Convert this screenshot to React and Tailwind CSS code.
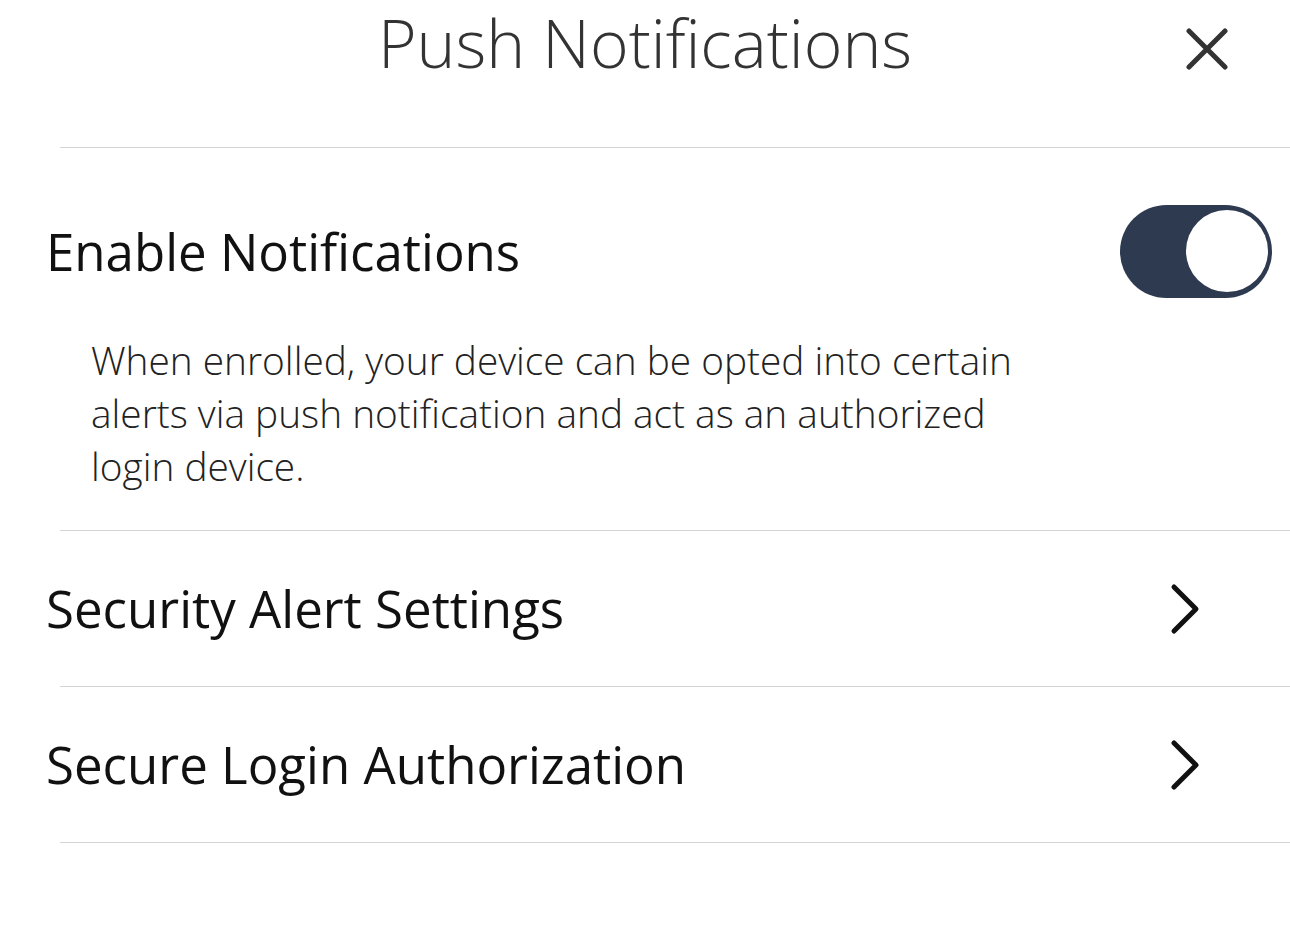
import React, { useState } from "react";

function Chevron() {
  return (
    <svg width="36" height="52" viewBox="0 0 36 52" fill="none">
      <path d="M8 4 L30 26 L8 48" stroke="#111" strokeWidth="5" strokeLinecap="round" strokeLinejoin="round" />
    </svg>
  );
}

export default function App() {
  const [enabled, setEnabled] = useState(true);

  return (
    <div className="bg-white w-[1290px] h-[932px] overflow-hidden" style={{ fontFamily: "'Open Sans', sans-serif" }}>
      {/* HEADER */}
      <div className="relative h-[147px] flex justify-center">
        <h1 className="text-[66px] font-light text-[#333] leading-[1.2] pt-[3px]">Push Notifications</h1>
        <button className="absolute right-[62px] top-[28px] p-0">
          <svg width="42" height="42" viewBox="0 0 42 42">
            <path d="M3 3 L39 39 M39 3 L3 39" stroke="#333" strokeWidth="5" strokeLinecap="round" />
          </svg>
        </button>
      </div>

      <div className="ml-[60px] border-t border-[#d4d4d4]" />

      {/* ENABLE */}
      <div className="pl-[46px] pr-[18px]">
        <div className="flex items-center justify-between h-[206px]">
          <span className="text-[51px] text-[#111]">Enable Notifications</span>
          <button
            onClick={() => setEnabled(!enabled)}
            className="w-[152px] h-[93px] rounded-full bg-[#2d3a4f] flex items-center px-[4px] justify-end"
          >
            <span className="w-[82px] h-[82px] rounded-full bg-white block" />
          </button>
        </div>
        <p className="pl-[45px] -mt-[20px] w-[1010px] text-[38.8px] leading-[53px] font-light text-[#222] pb-[37px]">
          When enrolled, your device can be opted into certain alerts via push notification and act as an authorized login device.
        </p>
      </div>

      <div className="ml-[60px] border-t border-[#d4d4d4]" />

      {/* ROWS */}
      {["Security Alert Settings", "Secure Login Authorization"].map((t) => (
        <div key={t}>
          <div className="flex items-center justify-between h-[155px] pl-[46px] pr-[88px]">
            <span className="text-[51px] text-[#111]">{t}</span>
            <Chevron />
          </div>
          <div className="ml-[60px] border-t border-[#d4d4d4]" />
        </div>
      ))}
    </div>
  );
}
